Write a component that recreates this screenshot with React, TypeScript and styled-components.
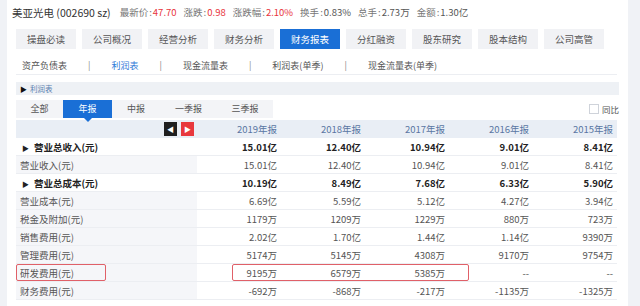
import * as React from 'react'
import styled, { createGlobalStyle } from 'styled-components'

const GlobalStyle = createGlobalStyle`
  html, body {
    margin: 0;
    padding: 0;
    background: #f0f2f6;
    font-family: "Noto Sans CJK SC", "Noto Sans", sans-serif;
  }
`

const Page = styled.div`
  width: 640px;
  height: 306px;
  overflow: hidden;
  display: flex;
`

const Panel = styled.div`
  margin-left: 7px;
  width: 621px;
  background: #fff;
  display: flex;
  flex-direction: column;
`

const Header = styled.div`
  height: 24px;
  padding-left: 5px;
  display: flex;
  align-items: center;
  font-size: 9.5px;
  color: #777;
`

const Title = styled.span`
  font-size: 10.5px;
  color: #333;
  margin-right: 9px;
`

const Stat = styled.span`
  margin-right: 7px;
`

const Colon = styled.span`
  margin: 0 1px;
`

const Red = styled.span`
  color: #e8343c;
`

const Plain = styled.span`
  color: #555;
`

const NavBar = styled.div`
  display: flex;
  gap: 6px;
  margin-top: 5px;
  padding-left: 9px;
`

const NavButton = styled.div<{ $active?: boolean }>`
  width: 60px;
  height: 20px;
  line-height: 20px;
  text-align: center;
  font-size: 9.5px;
  background: ${p => (p.$active ? '#1a6fd6' : '#f1f2f5')};
  color: ${p => (p.$active ? '#fff' : '#555')};
`

const SubTabs = styled.div`
  margin: 5px 0 0 9px;
  width: 601px;
  height: 21px;
  padding-top: 2px;
  box-sizing: border-box;
  border-bottom: 1px solid #eceef2;
  display: flex;
  align-items: center;
  font-size: 9px;
  color: #555;
`

const SubTab = styled.span<{ $active?: boolean }>`
  color: ${p => (p.$active ? '#2f7ad8' : '#555')};
`

const Sep = styled.span`
  color: #888;
  margin: 0 21px;
`

const SectionBar = styled.div`
  margin: 7px 0 0 9px;
  width: 603px;
  height: 13px;
  background: #eef1f5;
  display: flex;
  align-items: center;
  padding-left: 4px;
  box-sizing: border-box;
  font-size: 7.5px;
  color: #5b7fb0;
  gap: 3px;
`

const Arrow = styled.span`
  color: #111;
  font-size: 7px;
`

const PeriodRow = styled.div`
  margin: 5px 0 0 9px;
  width: 603px;
  height: 18px;
  display: flex;
  align-items: center;
`

const PeriodTabs = styled.div`
  display: flex;
  background: #f3f4f7;
  height: 18px;
`

const PeriodTab = styled.div<{ $active?: boolean; $w: number }>`
  position: relative;
  width: ${p => p.$w}px;
  height: 18px;
  line-height: 18px;
  text-align: center;
  font-size: 9px;
  background: ${p => (p.$active ? '#1a6fd6' : 'transparent')};
  color: ${p => (p.$active ? '#fff' : '#555')};
  ${p =>
    p.$active &&
    `&::after {
      content: '';
      position: absolute;
      left: 50%;
      bottom: -4px;
      margin-left: -4px;
      border-left: 4px solid transparent;
      border-right: 4px solid transparent;
      border-top: 4px solid #1a6fd6;
    }`}
`

const Compare = styled.label`
  margin-left: auto;
  display: flex;
  align-items: center;
  gap: 3px;
  font-size: 8.5px;
  color: #555;
`

const CheckBox = styled.span`
  width: 8px;
  height: 8px;
  border: 1px solid #cfd3da;
  background: #fff;
`

const Table = styled.div`
  margin: 2px 0 0 9px;
  width: 601px;
  display: grid;
  grid-template-columns: 181px repeat(5, 84px);
  font-size: 9.5px;
`

const HeadCell = styled.div`
  height: 18px;
  background: #e9eef5;
  color: #5a76a3;
  text-align: right;
  line-height: 18px;
  padding-right: 4px;
`

const HeadLabel = styled.div`
  height: 18px;
  background: #e9eef5;
  display: flex;
  justify-content: flex-end;
  align-items: center;
  gap: 4px;
  padding-right: 3px;
`

const PageBtn = styled.div<{ $red?: boolean }>`
  width: 13px;
  height: 14px;
  background: ${p => (p.$red ? '#e8383d' : '#1f1f1f')};
  display: flex;
  align-items: center;
  justify-content: center;
  color: #fff;
  font-size: 7px;
`

const Row = styled.div`
  display: contents;
`

const LabelCell = styled.div<{ $bold?: boolean }>`
  position: relative;
  box-sizing: border-box;
  height: 18px;
  line-height: 18px;
  border-bottom: 1px solid #eceef2;
  padding-left: ${p => (p.$bold ? '6px' : '4px')};
  background: ${p => (p.$bold ? '#fff' : '#f5f6f9')};
  color: ${p => (p.$bold ? '#222' : '#555')};
  font-weight: ${p => (p.$bold ? 700 : 400)};
  white-space: nowrap;
`

const DataCell = styled.div<{ $bold?: boolean }>`
  position: relative;
  box-sizing: border-box;
  height: 18px;
  line-height: 18px;
  border-bottom: 1px solid #eceef2;
  text-align: right;
  padding-right: 4px;
  color: ${p => (p.$bold ? '#222' : '#555')};
  font-weight: ${p => (p.$bold ? 700 : 400)};
`

const Highlight = styled.div<{ $w: number; $l: number }>`
  position: absolute;
  top: 0;
  left: ${p => p.$l}px;
  width: ${p => p.$w}px;
  height: 17px;
  border: 1px solid #e06068;
  border-radius: 2px;
  box-sizing: border-box;
  pointer-events: none;
`

const Tri = styled.span`
  font-size: 7px;
  margin-right: 5px;
`

const navItems = ['操盘必读', '公司概况', '经营分析', '财务分析', '财务报表', '分红融资', '股东研究', '股本结构', '公司高管']
const years = ['2019年报', '2018年报', '2017年报', '2016年报', '2015年报']

const rows: { label: string; bold?: boolean; values: string[]; mark?: boolean }[] = [
  { label: '营业总收入(元)', bold: true, values: ['15.01亿', '12.40亿', '10.94亿', '9.01亿', '8.41亿'] },
  { label: '营业收入(元)', values: ['15.01亿', '12.40亿', '10.94亿', '9.01亿', '8.41亿'] },
  { label: '营业总成本(元)', bold: true, values: ['10.19亿', '8.49亿', '7.68亿', '6.33亿', '5.90亿'] },
  { label: '营业成本(元)', values: ['6.69亿', '5.59亿', '5.12亿', '4.27亿', '3.94亿'] },
  { label: '税金及附加(元)', values: ['1179万', '1209万', '1229万', '880万', '723万'] },
  { label: '销售费用(元)', values: ['2.02亿', '1.70亿', '1.44亿', '1.14亿', '9390万'] },
  { label: '管理费用(元)', values: ['5174万', '5145万', '4308万', '9170万', '9754万'] },
  { label: '研发费用(元)', values: ['9195万', '6579万', '5385万', '--', '--'], mark: true },
  { label: '财务费用(元)', values: ['-692万', '-868万', '-217万', '-1135万', '-1325万'] },
]

export default function App() {
  return (
    <Page>
      <GlobalStyle />
      <Panel>
        <Header>
          <Title>美亚光电 (002690 sz)</Title>
          <Stat>最新价<Colon>:</Colon><Red>47.70</Red></Stat>
          <Stat>涨跌<Colon>:</Colon><Red>0.98</Red></Stat>
          <Stat>涨跌幅<Colon>:</Colon><Red>2.10%</Red></Stat>
          <Stat>换手<Colon>:</Colon><Plain>0.83%</Plain></Stat>
          <Stat>总手<Colon>:</Colon><Plain>2.73万</Plain></Stat>
          <Stat>金额<Colon>:</Colon><Plain>1.30亿</Plain></Stat>
        </Header>

        <NavBar>
          {navItems.map(n => (
            <NavButton key={n} $active={n === '财务报表'}>{n}</NavButton>
          ))}
        </NavBar>

        <SubTabs>
          <SubTab style={{ marginLeft: 6 }}>资产负债表</SubTab>
          <Sep>|</Sep>
          <SubTab $active>利润表</SubTab>
          <Sep>|</Sep>
          <SubTab>现金流量表</SubTab>
          <Sep>|</Sep>
          <SubTab>利润表(单季)</SubTab>
          <Sep>|</Sep>
          <SubTab>现金流量表(单季)</SubTab>
        </SubTabs>

        <SectionBar>
          <Arrow>▶</Arrow>利润表
        </SectionBar>

        <PeriodRow>
          <PeriodTabs>
            <PeriodTab $w={47}>全部</PeriodTab>
            <PeriodTab $w={49} $active>年报</PeriodTab>
            <PeriodTab $w={48}>中报</PeriodTab>
            <PeriodTab $w={57}>一季报</PeriodTab>
            <PeriodTab $w={56}>三季报</PeriodTab>
          </PeriodTabs>
          <Compare>
            <CheckBox />同比
          </Compare>
        </PeriodRow>

        <Table>
          <HeadLabel>
            <PageBtn>◀</PageBtn>
            <PageBtn $red>▶</PageBtn>
          </HeadLabel>
          {years.map(y => (
            <HeadCell key={y}>{y}</HeadCell>
          ))}
          {rows.map(r => (
            <Row key={r.label}>
              <LabelCell $bold={r.bold}>
                {r.bold && <Tri>▶</Tri>}
                {r.label}
                {r.mark && <Highlight $l={0} $w={90} />}
              </LabelCell>
              {r.values.map((v, i) => (
                <DataCell key={i} $bold={r.bold}>
                  {v}
                  {r.mark && i === 0 && <Highlight $l={35} $w={237} />}
                </DataCell>
              ))}
            </Row>
          ))}
        </Table>
      </Panel>
    </Page>
  )
}
